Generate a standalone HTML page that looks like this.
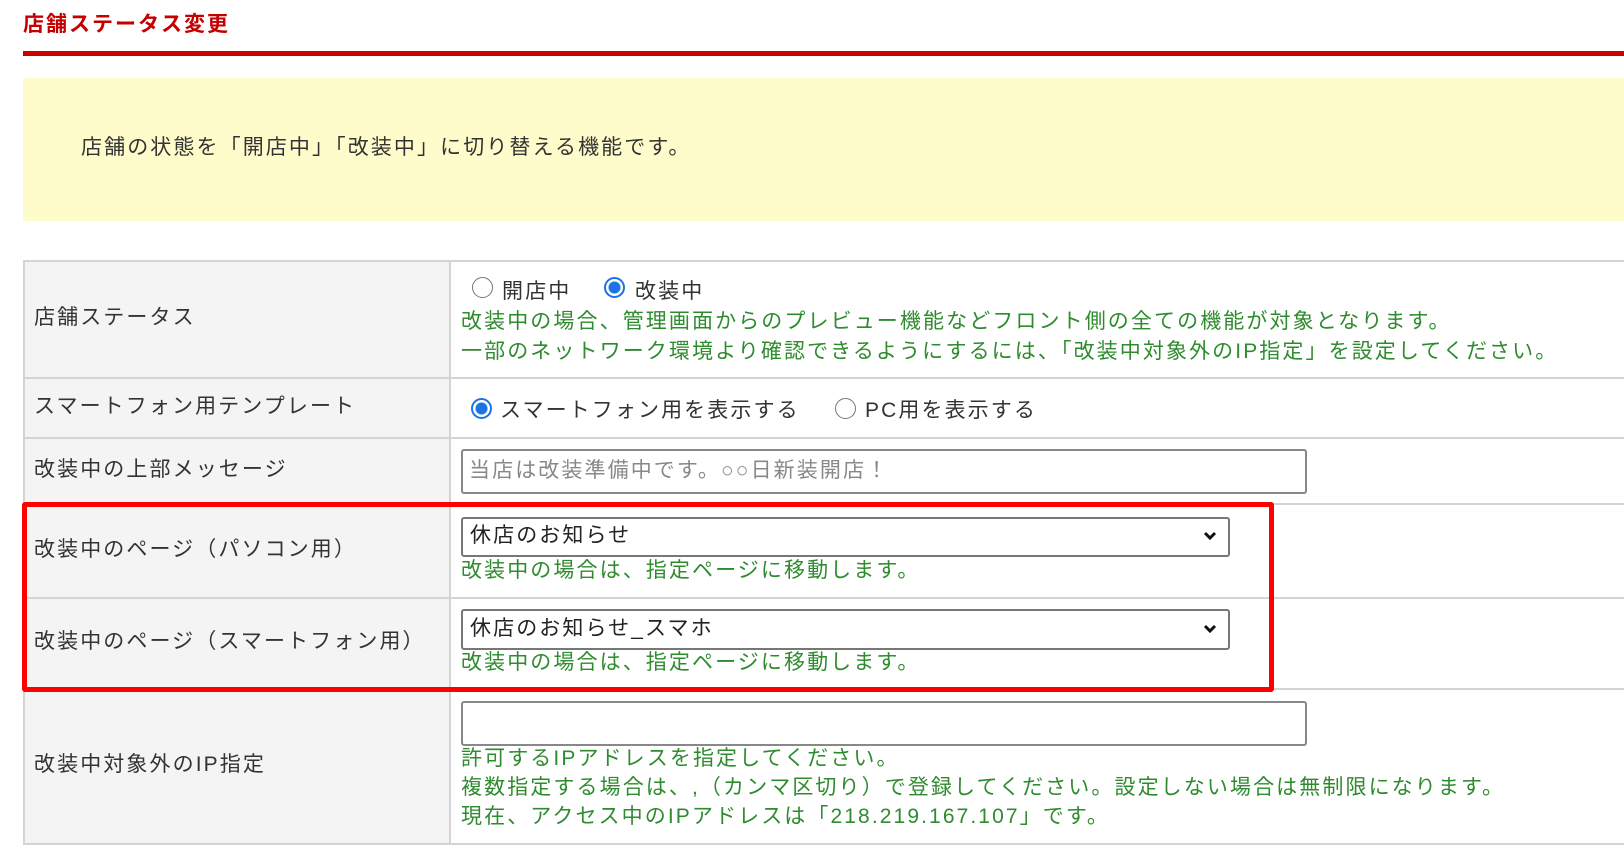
<!DOCTYPE html>
<html><head><meta charset="utf-8"><style>
*{margin:0;padding:0;box-sizing:border-box}
body{width:1624px;height:861px;background:#fff;position:relative;overflow:hidden;font-family:"Liberation Sans","Noto Sans CJK JP",sans-serif;font-size:21px;letter-spacing:2.1px;color:#333}
.a{position:absolute;white-space:nowrap;line-height:30px}
.g{color:#2e8b2e}
.hl{position:absolute;left:23px;right:0;height:2px;background:#d4d4d4}
.radio{position:absolute;width:21px;height:21px;border-radius:50%;border:1.5px solid #767676;background:#fff}
.radio.on{border:2px solid #1a73e8;background:radial-gradient(circle,#1a73e8 0 5.5px,#fff 6.5px)}
.box{position:absolute;border:2px solid #888;border-radius:3px;background:#fff}
.sel{position:absolute;border:2px solid #777;border-radius:3px;background:#fff}
</style></head><body>
<div class="a" style="left:23px;top:10px;font-size:21px;letter-spacing:2px;font-weight:bold;color:#c40000">店舗ステータス変更</div>
<div style="position:absolute;left:23px;right:0;top:51px;height:5px;background:#cc0000"></div>
<div style="position:absolute;left:23px;right:0;top:78px;height:143px;background:#fffccc"></div>
<div class="a" style="left:81px;top:133px">店舗の状態を「開店中」「改装中」に切り替える機能です。</div>

<div style="position:absolute;left:23px;top:261px;width:427px;height:583px;background:#f3f4f3"></div>
<div style="position:absolute;left:23px;top:261px;width:2px;height:583px;background:#d4d4d4"></div>
<div style="position:absolute;left:449px;top:261px;width:2px;height:583px;background:#d4d4d4"></div>
<div class="hl" style="top:260px"></div>
<div class="hl" style="top:377px"></div>
<div class="hl" style="top:437px"></div>
<div class="hl" style="top:503px"></div>
<div class="hl" style="top:597px"></div>
<div class="hl" style="top:688px"></div>
<div class="hl" style="top:843px"></div>

<div class="a" style="left:34px;top:303px">店舗ステータス</div>
<div class="a" style="left:34px;top:392px">スマートフォン用テンプレート</div>
<div class="a" style="left:34px;top:455px">改装中の上部メッセージ</div>
<div class="a" style="left:34px;top:535px">改装中のページ（パソコン用）</div>
<div class="a" style="left:34px;top:627px">改装中のページ（スマートフォン用）</div>
<div class="a" style="left:34px;top:750px">改装中対象外のIP指定</div>

<div class="radio" style="left:472px;top:277px"></div>
<div class="a" style="left:502px;top:277px">開店中</div>
<div class="radio on" style="left:604px;top:277px"></div>
<div class="a" style="left:635px;top:277px">改装中</div>
<div class="a g" style="left:461px;top:307px">改装中の場合、管理画面からのプレビュー機能などフロント側の全ての機能が対象となります。</div>
<div class="a g" style="left:461px;top:337px">一部のネットワーク環境より確認できるようにするには、「改装中対象外のIP指定」を設定してください。</div>

<div class="radio on" style="left:471px;top:398px"></div>
<div class="a" style="left:500px;top:396px">スマートフォン用を表示する</div>
<div class="radio" style="left:835px;top:398px"></div>
<div class="a" style="left:865px;top:396px">PC用を表示する</div>

<div class="box" style="left:461px;top:449px;width:846px;height:45px"></div>
<div class="a" style="left:469px;top:456px;color:#888">当店は改装準備中です。○○日新装開店！</div>

<div class="sel" style="left:461px;top:517px;width:769px;height:40px"></div>
<div class="a" style="left:470px;top:521px;color:#222">休店のお知らせ</div>
<svg style="position:absolute;left:1203px;top:531px" width="14" height="10"><path d="M2 2l5 5 5-5" stroke="#111" stroke-width="3" fill="none"/></svg>
<div class="a g" style="left:461px;top:556px">改装中の場合は、指定ページに移動します。</div>

<div class="sel" style="left:461px;top:609px;width:769px;height:41px"></div>
<div class="a" style="left:470px;top:614px;color:#222">休店のお知らせ_スマホ</div>
<svg style="position:absolute;left:1203px;top:624px" width="14" height="10"><path d="M2 2l5 5 5-5" stroke="#111" stroke-width="3" fill="none"/></svg>
<div class="a g" style="left:461px;top:648px">改装中の場合は、指定ページに移動します。</div>

<div class="box" style="left:461px;top:701px;width:846px;height:45px"></div>
<div class="a g" style="left:461px;top:744px">許可するIPアドレスを指定してください。</div>
<div class="a g" style="left:461px;top:773px">複数指定する場合は、,（カンマ区切り）で登録してください。設定しない場合は無制限になります。</div>
<div class="a g" style="left:461px;top:802px">現在、アクセス中のIPアドレスは「218.219.167.107」です。</div>

<div style="position:absolute;left:22px;top:502px;width:1252px;height:190px;border:5px solid #ff0000;border-radius:3px"></div>
</body></html>
